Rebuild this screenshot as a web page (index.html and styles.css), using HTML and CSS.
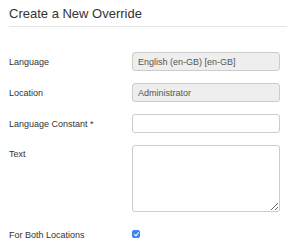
FILE: index.html
```html
<!DOCTYPE html>
<html lang="en">
<head>
    <meta charset="UTF-8">
    <meta name="viewport" content="width=device-width, initial-scale=1.0">
    <title>Create a New Override</title>
    <link rel="stylesheet" href="styles.css">
</head>
<body>
    <div class="override-container">
        <h1 class="section-title">Create a New Override</h1>

        <form class="override-form">
            <div class="form-row">
                <label class="form-label" for="language">Language</label>
                <input class="form-input" id="language" type="text" value="English (en-GB) [en-GB]" readonly>
            </div>
            <div class="form-row">
                <label class="form-label" for="location">Location</label>
                <input class="form-input" id="location" type="text" value="Administrator" readonly>
            </div>
            <div class="form-row">
                <label class="form-label" for="constant">Language Constant *</label>
                <input class="form-input editable" id="constant" type="text">
            </div>
            <div class="form-row text-row">
                <label class="form-label" for="text">Text</label>
                <textarea class="form-input editable form-textarea" id="text"></textarea>
            </div>
            <div class="form-row">
                <label class="form-label" for="both">For Both Locations</label>
                <input class="form-check" id="both" type="checkbox" checked>
            </div>
        </form>
    </div>
</body>
</html>
```

FILE: styles.css
```css
:root {
    --text-dark: #333333;
    --text-muted: #555555;
    --border: #cccccc;
    --input-bg: #eeeeee;
    --check-blue: #3a84f5;
}

* {
    margin: 0;
    padding: 0;
    box-sizing: border-box;
    font-family: 'Liberation Sans', Arial, sans-serif;
}

body {
    background-color: #ffffff;
    color: var(--text-dark);
}

.override-container {
    padding: 0 0 0 9px;
}

.section-title {
    font-size: 13px;
    font-weight: normal;
    line-height: 16px;
    margin-top: 6px;
    padding-bottom: 4px;
    border-bottom: 1px solid #e5e5e5;
}

.override-form {
    padding-top: 25px;
}

.form-row {
    display: flex;
    align-items: center;
    min-height: 19px;
    margin-bottom: 12px;
}

.text-row {
    align-items: flex-start;
    margin-bottom: 13px;
}

.text-row .form-label {
    padding-top: 4px;
}

.form-label {
    width: 123px;
    font-size: 9px;
    color: var(--text-dark);
}

.form-input {
    width: 148px;
    height: 19px;
    padding: 0 5px;
    font-size: 9px;
    color: var(--text-muted);
    background: var(--input-bg);
    border: 1px solid var(--border);
    border-radius: 3px;
    outline: none;
}

.form-input.editable {
    background: #ffffff;
}

.form-textarea {
    height: 67px;
    resize: both;
}

.form-check {
    appearance: none;
    -webkit-appearance: none;
    width: 8px;
    height: 8px;
    margin-top: -2px;
    border-radius: 2px;
    background: var(--check-blue);
    position: relative;
}

.form-check::after {
    content: '';
    position: absolute;
    left: 2.6px;
    top: 1px;
    width: 2px;
    height: 4px;
    border-right: 1px solid #ffffff;
    border-bottom: 1px solid #ffffff;
    transform: rotate(40deg);
}
```
